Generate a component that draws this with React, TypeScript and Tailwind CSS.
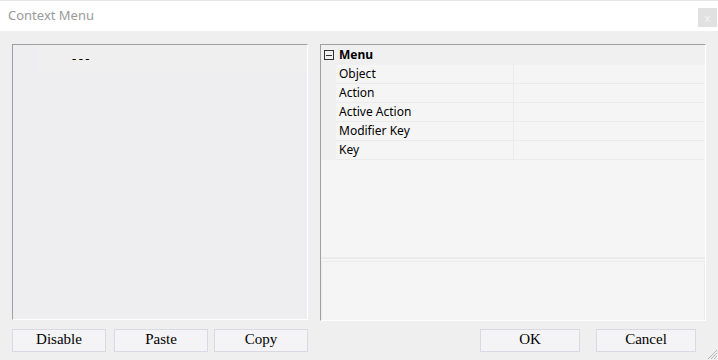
import React from "react";

const rows = ["Object", "Action", "Active Action", "Modifier Key", "Key"];

function Btn({ label, w }: { label: string; w: string }) {
  return (
    <div
      className={`${w} h-[23px] border border-[#d9d9e3] bg-[#f4f4f6] flex items-center justify-center text-[15px] text-black leading-none pb-[3px]`}
      style={{ fontFamily: '"Liberation Serif", serif' }}
    >
      {label}
    </div>
  );
}

export default function App() {
  return (
    <div
      className="w-[718px] h-[360px] bg-[#efefef] flex flex-col overflow-hidden relative"
      style={{ fontFamily: '"Noto Sans", "Open Sans", sans-serif' }}
    >
      {/* title bar */}
      <div className="h-[31px] bg-white border-t border-[#e6e6e6] flex items-start justify-between">
        <div className="pl-[8px] pt-[5px] text-[13px] text-[#9a9a9a] leading-[18px]">Context Menu</div>
        <div className="mt-[7px] mr-[1px] w-[19px] h-[19px] bg-[#e1e1e1] flex items-center justify-center text-[11px] text-[#f4f4f4] leading-none">
          x
        </div>
      </div>

      {/* panels */}
      <div className="flex pt-[13px] pl-[12px] gap-[12px]">
        {/* left panel */}
        <div className="w-[296px] h-[276px] border-t border-l border-[#a0a0a0] border-r border-b border-r-white border-b-white bg-[#eeeef0] flex flex-col">
          <div className="h-[27px] ml-[25px] bg-[#efefef] flex items-center">
            <span className="ml-[34px] text-[13px] text-black leading-none tracking-[2.5px]">---</span>
          </div>
        </div>

        {/* right panel */}
        <div className="w-[386px] h-[277px] border-t border-l border-[#a0a0a0] border-r border-b border-r-white border-b-white bg-[#f5f5f5] flex flex-col">
          <div className="flex flex-col h-[212px]">
            <div className="h-[20px] bg-[#f0f0f0] flex items-center">
              <div className="w-[15px] flex items-center justify-center">
                <div className="w-[10px] h-[10px] border border-[#333] flex items-center justify-center">
                  <div className="w-[6px] h-[1px] bg-[#333]" />
                </div>
              </div>
              <span className="ml-[3px] text-[12px] font-bold text-black leading-none">Menu</span>
            </div>
            {rows.map((r) => (
              <div key={r} className="h-[19px] flex">
                <div className="w-[15px] bg-[#f0f0f0]" />
                <div className="w-[178px] border-b border-r border-[#ebebeb] flex items-center pl-[3px] text-[12px] text-black leading-none">
                  {r}
                </div>
                <div className="flex-1 border-b border-[#ebebeb]" />
              </div>
            ))}
          </div>
          <div className="h-[2px] bg-[#ebebeb]" />
          <div className="h-[2px]" />
          <div className="flex-1 border-t border-l border-r border-[#ebebeb]" />
        </div>
      </div>

      {/* buttons */}
      <div className="flex mt-[8px] pl-[12px]">
        <Btn label="Disable" w="w-[94px]" />
        <div className="w-[8px]" />
        <Btn label="Paste" w="w-[94px]" />
        <div className="w-[6px]" />
        <Btn label="Copy" w="w-[94px]" />
        <div className="w-[172px]" />
        <Btn label="OK" w="w-[100px]" />
        <div className="w-[16px]" />
        <Btn label="Cancel" w="w-[100px]" />
      </div>

      {/* resize grip */}
      <svg className="absolute right-0 bottom-0" width="13" height="13" viewBox="0 0 13 13">
        <path d="M12 3 L3 12 M12 6 L6 12 M12 9 L9 12" stroke="#b5b5b5" strokeWidth="1" />
      </svg>
    </div>
  );
}
